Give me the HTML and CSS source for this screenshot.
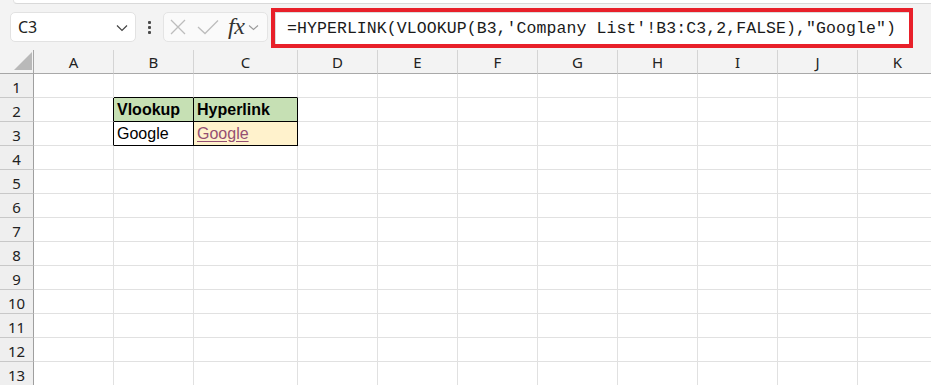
FILE: index.html
```html
<!DOCTYPE html>
<html>
<head>
<meta charset="utf-8">
<link rel="stylesheet" href="styles.css">
</head>
<body>
<div class="toolbar">
  <div class="ribbon-edge"></div>
  <div class="formula-row">
    <div class="namebox">
      <span class="ref">C3</span>
      <svg class="chev" width="12" height="8" viewBox="0 0 12 8"><polyline points="1,1.5 6,6.5 11,1.5" fill="none" stroke="#444" stroke-width="1.2"/></svg>
    </div>
    <div class="dots"><span></span><span></span><span></span></div>
    <div class="fbuttons">
      <svg class="ic-x" width="16" height="16" viewBox="0 0 16 16"><path d="M1 1 L15 15 M15 1 L1 15" stroke="#bdbdbd" stroke-width="1.3" fill="none"/></svg>
      <svg class="ic-check" width="22" height="16" viewBox="0 0 22 16"><path d="M1 8 L8 14.5 L21 1.5" stroke="#bdbdbd" stroke-width="1.3" fill="none"/></svg>
      <span class="fx">fx</span>
      <svg class="chev-sm" width="11" height="7" viewBox="0 0 11 7"><polyline points="1,1.5 5.5,5.5 10,1.5" fill="none" stroke="#9a9a9a" stroke-width="1.1"/></svg>
    </div>
    <div class="formula">=HYPERLINK(VLOOKUP(B3,'Company List'!B3:C3,2,FALSE),"Google")</div>
  </div>
</div>
<div class="sheet">
  <div class="corner"><div class="tri"></div></div>
  <div class="ch">A</div><div class="ch">B</div><div class="ch">C</div><div class="ch">D</div><div class="ch">E</div><div class="ch">F</div><div class="ch">G</div><div class="ch">H</div><div class="ch">I</div><div class="ch">J</div><div class="ch">K</div>

  <div class="rh">1</div><div class="c"></div><div class="c bb"></div><div class="c bb"></div><div class="c"></div><div class="c"></div><div class="c"></div><div class="c"></div><div class="c"></div><div class="c"></div><div class="c"></div><div class="c"></div>

  <div class="rh">2</div><div class="c br"></div><div class="c hd">Vlookup</div><div class="c hd">Hyperlink</div><div class="c"></div><div class="c"></div><div class="c"></div><div class="c"></div><div class="c"></div><div class="c"></div><div class="c"></div><div class="c"></div>

  <div class="rh">3</div><div class="c br"></div><div class="c tb">Google</div><div class="c tb link-cell"><span class="link">Google</span></div><div class="c"></div><div class="c"></div><div class="c"></div><div class="c"></div><div class="c"></div><div class="c"></div><div class="c"></div><div class="c"></div>

  <div class="rh">4</div><div class="c"></div><div class="c"></div><div class="c"></div><div class="c"></div><div class="c"></div><div class="c"></div><div class="c"></div><div class="c"></div><div class="c"></div><div class="c"></div><div class="c"></div>
  <div class="rh">5</div><div class="c"></div><div class="c"></div><div class="c"></div><div class="c"></div><div class="c"></div><div class="c"></div><div class="c"></div><div class="c"></div><div class="c"></div><div class="c"></div><div class="c"></div>
  <div class="rh">6</div><div class="c"></div><div class="c"></div><div class="c"></div><div class="c"></div><div class="c"></div><div class="c"></div><div class="c"></div><div class="c"></div><div class="c"></div><div class="c"></div><div class="c"></div>
  <div class="rh">7</div><div class="c"></div><div class="c"></div><div class="c"></div><div class="c"></div><div class="c"></div><div class="c"></div><div class="c"></div><div class="c"></div><div class="c"></div><div class="c"></div><div class="c"></div>
  <div class="rh">8</div><div class="c"></div><div class="c"></div><div class="c"></div><div class="c"></div><div class="c"></div><div class="c"></div><div class="c"></div><div class="c"></div><div class="c"></div><div class="c"></div><div class="c"></div>
  <div class="rh">9</div><div class="c"></div><div class="c"></div><div class="c"></div><div class="c"></div><div class="c"></div><div class="c"></div><div class="c"></div><div class="c"></div><div class="c"></div><div class="c"></div><div class="c"></div>
  <div class="rh">10</div><div class="c"></div><div class="c"></div><div class="c"></div><div class="c"></div><div class="c"></div><div class="c"></div><div class="c"></div><div class="c"></div><div class="c"></div><div class="c"></div><div class="c"></div>
  <div class="rh">11</div><div class="c"></div><div class="c"></div><div class="c"></div><div class="c"></div><div class="c"></div><div class="c"></div><div class="c"></div><div class="c"></div><div class="c"></div><div class="c"></div><div class="c"></div>
  <div class="rh">12</div><div class="c"></div><div class="c"></div><div class="c"></div><div class="c"></div><div class="c"></div><div class="c"></div><div class="c"></div><div class="c"></div><div class="c"></div><div class="c"></div><div class="c"></div>
  <div class="rh">13</div><div class="c"></div><div class="c"></div><div class="c"></div><div class="c"></div><div class="c"></div><div class="c"></div><div class="c"></div><div class="c"></div><div class="c"></div><div class="c"></div><div class="c"></div>
</div>
</body>
</html>
```

FILE: styles.css
```css
* { box-sizing: border-box; }
html, body {
  margin: 0;
  padding: 0;
  background: #ffffff;
  overflow: hidden;
}
body {
  width: 931px;
  height: 385px;
  font-family: "Noto Sans", "Open Sans", sans-serif;
  color: #1f1f1f;
}

/* ---------- toolbar ---------- */
.toolbar {
  background: #f3f3f3;
  height: 50px;
}
.ribbon-edge {
  height: 4px;
  margin-left: 13px;
  background: #ffffff;
  border-bottom: 1px solid #d9d9d9;
  border-left: 1px solid #e3e3e3;
  border-bottom-left-radius: 5px;
}
.formula-row {
  height: 46px;
  display: flex;
  align-items: center;
  padding-left: 10px;
}
.namebox {
  width: 126px;
  height: 30px;
  background: #ffffff;
  border: 1px solid #e2e2e2;
  border-radius: 5px;
  display: flex;
  align-items: center;
  justify-content: space-between;
  padding: 0 7px 0 7px;
}
.namebox .ref {
  font-size: 16px;
  color: #222;
}
.chev { margin-top: 1px; }
.dots {
  width: 27px;
  display: flex;
  flex-direction: column;
  align-items: center;
  gap: 2px;
}
.dots span {
  width: 3px;
  height: 3px;
  background: #4a4a4a;
  border-radius: 1px;
}
.fbuttons {
  width: 105px;
  height: 30px;
  background: #fafafa;
  border: 1px solid #e4e4e4;
  border-radius: 5px;
  display: flex;
  align-items: center;
  padding-left: 6px;
}
.ic-x { margin-right: 11px; }
.ic-check { margin-right: 9px; }
.fx {
  font-family: "Liberation Serif", "DejaVu Serif", serif;
  font-style: italic;
  font-size: 24px;
  color: #333;
  line-height: 1;
  margin-right: 4px;
  margin-top: -3px;
  letter-spacing: -0.5px;
}
.chev-sm { margin-top: 1px; }
.formula {
  margin-left: 3px;
  margin-top: 2px;
  width: 642px;
  height: 40px;
  border: 4px solid #e8202a;
  background: #ffffff;
  font-family: "Liberation Mono", "DejaVu Sans Mono", monospace;
  font-size: 16.5px;
  letter-spacing: 0.08px;
  color: #1a1a1a;
  display: flex;
  align-items: center;
  padding-left: 12px;
  white-space: nowrap;
  box-shadow: inset 1px 1px 0 #dcdcdc;
}

/* ---------- sheet ---------- */
.sheet {
  display: grid;
  grid-template-columns: 34px 80px 80px 104px repeat(8, 80px);
  grid-auto-rows: 24px;
}
.corner {
  background: #f3f3f3;
  border-right: 1px solid #a6a6a6;
  border-bottom: 1px solid #a6a6a6;
  position: relative;
}
.tri {
  position: absolute;
  right: 1px;
  bottom: 3px;
  width: 0;
  height: 0;
  border-left: 18px solid transparent;
  border-bottom: 18px solid #b9b9b9;
}
.ch {
  background: #f3f3f3;
  border-right: 1px solid #d4d4d4;
  border-bottom: 1px solid #a9a9a9;
  display: flex;
  align-items: center;
  justify-content: center;
  font-size: 15px;
  color: #222;
  padding-top: 1px;
}
.rh {
  background: #efefef;
  border-right: 1px solid #9f9f9f;
  border-bottom: 1px solid #c8c8c8;
  display: flex;
  align-items: center;
  justify-content: center;
  font-size: 15px;
  color: #222;
  padding-top: 2px;
}
.c {
  border-right: 1px solid #e1e1e1;
  border-bottom: 1px solid #e1e1e1;
  display: flex;
  align-items: center;
  padding-left: 3px;
  font-family: "Liberation Sans", Arial, sans-serif;
  font-size: 16px;
  color: #000;
  white-space: nowrap;
}
.c.bb { border-bottom-color: #000; }
.c.br { border-right-color: #000; }
.c.hd {
  background: #c6e0b4;
  font-weight: bold;
  border-right-color: #000;
  border-bottom-color: #000;
}
.c.tb {
  border-right-color: #000;
  border-bottom-color: #000;
}
.c.link-cell { background: #fff2cc; }
.link {
  color: #954f72;
  text-decoration: underline;
  text-underline-offset: 2px;
}
```
